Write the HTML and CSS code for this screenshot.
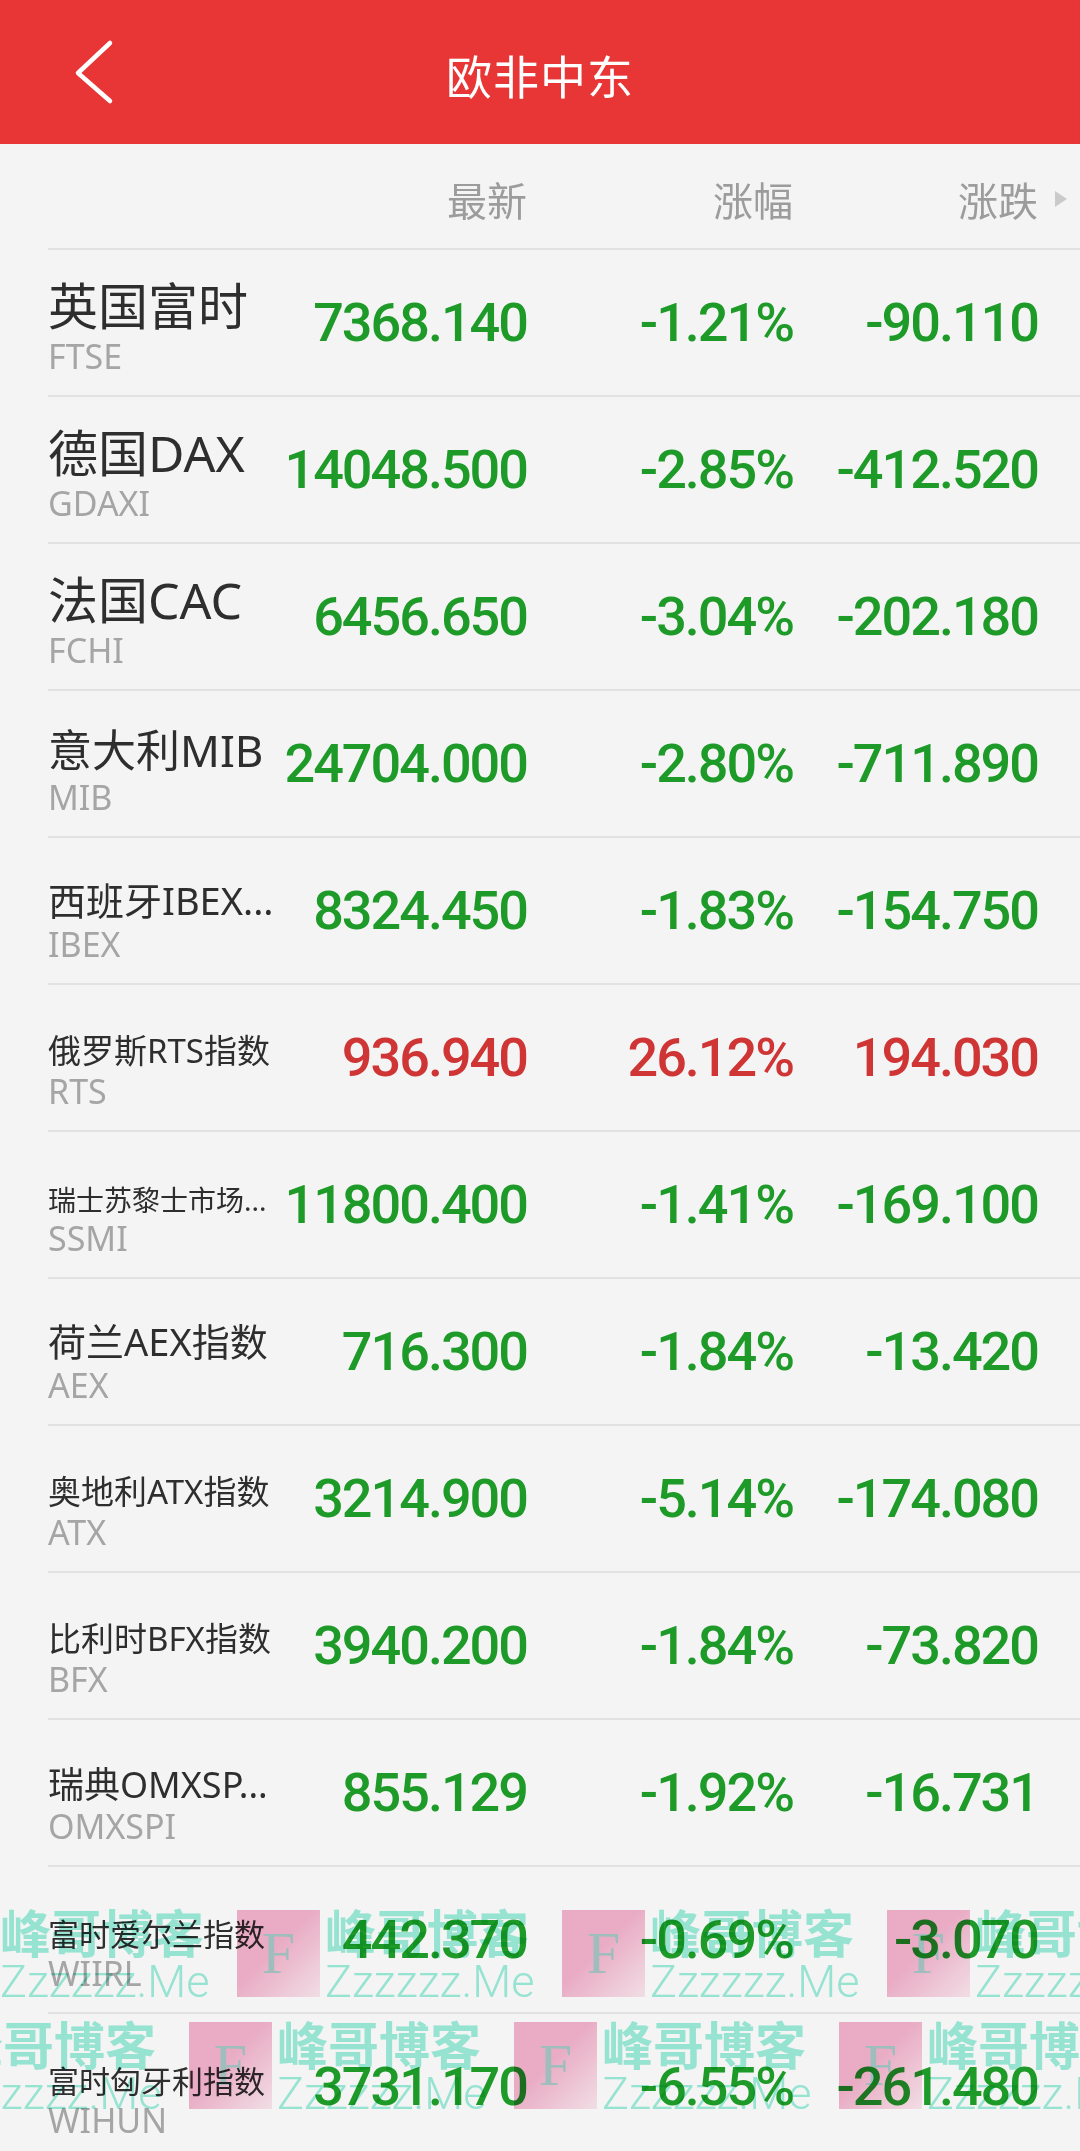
FILE: index.html
```html
<!DOCTYPE html>
<html>
	<head>
		<meta charset="utf-8">
		<title>欧非中东</title>
		<link rel="stylesheet" href="styles.css">
	</head>
	<body>
		<div class="page">
			<!-- 顶部标题栏 -->
			<div class="topbar">
				<a class="back" href="javascript:;">
					<svg width="40" height="66" viewBox="0 0 40 66"><polyline points="36,4 4,34 36,62" fill="none" stroke="#fff" stroke-width="4.5" stroke-linecap="round" stroke-linejoin="round"/></svg>
				</a>
				<h1 class="title">欧非中东</h1>
				<span></span>
			</div>

			<!-- 指数列表 -->
			<div class="list">
				<div class="row head">
					<span></span>
					<span class="th">最新</span>
					<span class="th">涨幅</span>
					<span class="th more">涨跌</span>
				</div>
				<div class="row">
					<div class="info"><div class="name xl">英国富时</div><div class="code">FTSE</div></div>
					<span class="num down">7368.140</span><span class="num down">-1.21%</span><span class="num down">-90.110</span>
				</div>
				<div class="row">
					<div class="info"><div class="name xl">德国DAX</div><div class="code">GDAXI</div></div>
					<span class="num down">14048.500</span><span class="num down">-2.85%</span><span class="num down">-412.520</span>
				</div>
				<div class="row">
					<div class="info"><div class="name xl">法国CAC</div><div class="code">FCHI</div></div>
					<span class="num down">6456.650</span><span class="num down">-3.04%</span><span class="num down">-202.180</span>
				</div>
				<div class="row">
					<div class="info"><div class="name lg">意大利MIB</div><div class="code">MIB</div></div>
					<span class="num down">24704.000</span><span class="num down">-2.80%</span><span class="num down">-711.890</span>
				</div>
				<div class="row">
					<div class="info"><div class="name md">西班牙IBEX...</div><div class="code">IBEX</div></div>
					<span class="num down">8324.450</span><span class="num down">-1.83%</span><span class="num down">-154.750</span>
				</div>
				<div class="row">
					<div class="info"><div class="name xs">俄罗斯RTS指数</div><div class="code">RTS</div></div>
					<span class="num up">936.940</span><span class="num up">26.12%</span><span class="num up">194.030</span>
				</div>
				<div class="row">
					<div class="info"><div class="name tiny">瑞士苏黎士市场...</div><div class="code">SSMI</div></div>
					<span class="num down">11800.400</span><span class="num down">-1.41%</span><span class="num down">-169.100</span>
				</div>
				<div class="row">
					<div class="info"><div class="name md">荷兰AEX指数</div><div class="code">AEX</div></div>
					<span class="num down">716.300</span><span class="num down">-1.84%</span><span class="num down">-13.420</span>
				</div>
				<div class="row">
					<div class="info"><div class="name xs">奥地利ATX指数</div><div class="code">ATX</div></div>
					<span class="num down">3214.900</span><span class="num down">-5.14%</span><span class="num down">-174.080</span>
				</div>
				<div class="row">
					<div class="info"><div class="name xs">比利时BFX指数</div><div class="code">BFX</div></div>
					<span class="num down">3940.200</span><span class="num down">-1.84%</span><span class="num down">-73.820</span>
				</div>
				<div class="row">
					<div class="info"><div class="name sm">瑞典OMXSP...</div><div class="code">OMXSPI</div></div>
					<span class="num down">855.129</span><span class="num down">-1.92%</span><span class="num down">-16.731</span>
				</div>
				<div class="row">
					<div class="info"><div class="name xxs">富时爱尔兰指数</div><div class="code">WIIRL</div></div>
					<span class="num down">442.370</span><span class="num down">-0.69%</span><span class="num down">-3.070</span>
				</div>
				<div class="row">
					<div class="info"><div class="name xxs">富时匈牙利指数</div><div class="code">WIHUN</div></div>
					<span class="num down">3731.170</span><span class="num down">-6.55%</span><span class="num down">-261.480</span>
				</div>
			</div>

			<!-- 水印 -->
			<div class="mark">
				<div class="mark-row">
					<div class="wm-text"><div class="wm-cn">峰哥博客</div><div class="wm-en">Zzzzzz.Me</div></div>
					<div class="wm-box">F</div>
					<div class="wm-text"><div class="wm-cn">峰哥博客</div><div class="wm-en">Zzzzzz.Me</div></div>
					<div class="wm-box">F</div>
					<div class="wm-text"><div class="wm-cn">峰哥博客</div><div class="wm-en">Zzzzzz.Me</div></div>
					<div class="wm-box">F</div>
					<div class="wm-text"><div class="wm-cn">峰哥博客</div><div class="wm-en">Zzzzzz.Me</div></div>
				</div>
				<div class="mark-row shift">
					<div class="wm-text"><div class="wm-cn">峰哥博客</div><div class="wm-en">Zzzzzz.Me</div></div>
					<div class="wm-box">F</div>
					<div class="wm-text"><div class="wm-cn">峰哥博客</div><div class="wm-en">Zzzzzz.Me</div></div>
					<div class="wm-box">F</div>
					<div class="wm-text"><div class="wm-cn">峰哥博客</div><div class="wm-en">Zzzzzz.Me</div></div>
					<div class="wm-box">F</div>
					<div class="wm-text"><div class="wm-cn">峰哥博客</div><div class="wm-en">Zzzzzz.Me</div></div>
				</div>
			</div>
		</div>
	</body>
</html>
```
FILE: styles.css
```css
*{
	padding: 0px;
	margin: 0px;
	box-sizing: border-box;
}
body{
	background-color: #f4f4f4;
	font-family: "Noto Sans", "Noto Sans CJK SC", sans-serif;
	overflow: hidden;
}
.page{
	width: 1080px;
	position: relative;
}

/* 标题栏 */
.topbar{
	height: 144px;
	background-color: #e83535;
	display: grid;
	grid-template-columns: 1fr auto 1fr;
	align-items: center;
}
.back{
	display: flex;
	padding-left: 74px;
}
.title{
	color: #fff;
	font-family: "Noto Sans CJK SC", sans-serif;
	font-size: 46px;
	font-weight: normal;
	letter-spacing: 1px;
	padding-top: 4px;
}

/* 列表 */
.row{
	display: grid;
	grid-template-columns: 226px 253px 266px 245px;
	margin-left: 48px;
	padding-right: 42px;
	height: 147px;
	border-bottom: 2px solid #e2e2e2;
	align-items: center;
}
.row.head{
	height: 106px;
	padding-top: 6px;
}
.th{
	text-align: right;
	font-family: "Noto Sans CJK SC", sans-serif;
	font-size: 40px;
	line-height: 1;
	color: #9c9c9c;
	position: relative;
}
.th.more::after{
	content: "";
	position: absolute;
	right: -29px;
	top: 50%;
	margin-top: -8px;
	border-left: 12px solid #cacaca;
	border-top: 8px solid transparent;
	border-bottom: 8px solid transparent;
}
.info{
	align-self: start;
	padding-top: 26px;
	white-space: nowrap;
}
.name{
	height: 60px;
	display: flex;
	align-items: flex-end;
	line-height: 1.2;
	color: #2e2e2e;
}
/* 名称字号随长度缩小 */
.name.xl{ font-size: 50px; }
.name.lg{ font-size: 44px; }
.name.md{ font-size: 38px; }
.name.sm{ font-size: 36px; }
.name.xs{ font-size: 33px; }
.name.xxs{ font-size: 31px; }
.name.tiny{ font-size: 28px; }
.code{
	font-size: 34px;
	line-height: 40px;
	color: #a5a5a5;
}
.num{
	text-align: right;
	font-family: Roboto, "Liberation Sans", sans-serif;
	font-weight: 500;
	font-size: 54px;
	letter-spacing: -2px;
	line-height: 1;
}
.down{
	color: #1e9a28;
}
.up{
	color: #cf3535;
}

/* 水印 */
.mark{
	position: absolute;
	left: 0px;
	top: 1906px;
	width: 1080px;
	height: 245px;
	overflow: hidden;
	pointer-events: none;
	mix-blend-mode: multiply;
}
.mark-row{
	display: flex;
	height: 112px;
	white-space: nowrap;
}
.mark-row.shift{
	margin-left: -48px;
}
.wm-text{
	flex: none;
	width: 207px;
	margin-right: 30px;
	color: #9eeedb;
}
.wm-cn{
	font-family: "Noto Sans CJK SC", sans-serif;
	font-weight: bold;
	font-size: 51px;
	line-height: 1;
}
.wm-en{
	font-family: Roboto, sans-serif;
	font-weight: 300;
	font-size: 45px;
	line-height: 1;
	margin-top: 2px;
}
.wm-box{
	flex: none;
	width: 83px;
	height: 87px;
	margin-top: 4px;
	margin-right: 5px;
	background: linear-gradient(135deg, #f4b4cd 45%, #fce8ef 100%);
	display: flex;
	align-items: center;
	justify-content: center;
	font-family: "Liberation Serif", serif;
	font-size: 60px;
	color: #a6c6c6;
}
```
